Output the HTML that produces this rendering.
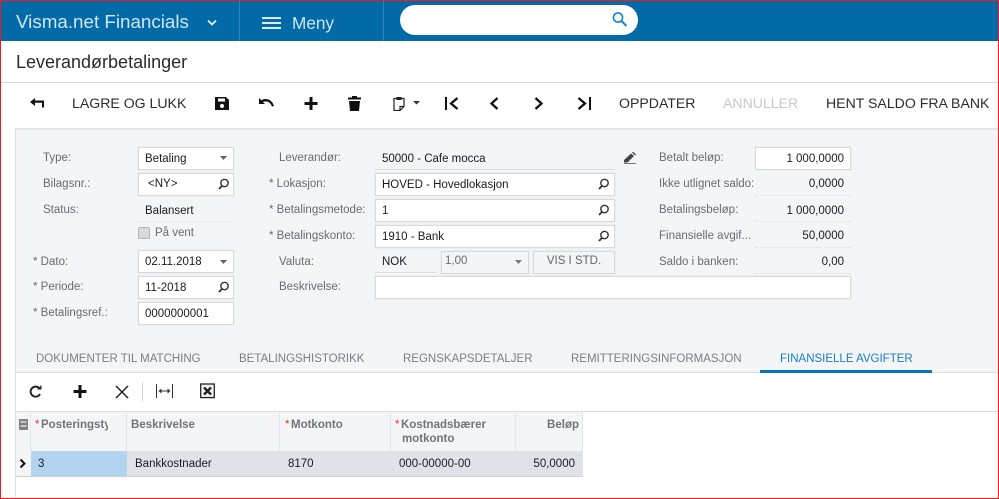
<!DOCTYPE html>
<html><head><meta charset="utf-8">
<style>
html,body{margin:0;padding:0;background:#fff}
#p{position:relative;width:999px;height:499px;overflow:hidden;background:#fff;font-family:"Liberation Sans",sans-serif;font-size:11.500px;color:#1a1a22}
#p div,#p svg{position:absolute}
#p .t{white-space:nowrap;line-height:14px}
.l{color:#6a6a72;font-size:11.500px}
.b{font-size:14.100px;color:#2b2b33}
.i{background:#fff;border:1px solid #d9dadd;box-sizing:border-box;height:23px;box-shadow:0 0 0 .5px #e6e7ea}
.u{height:1px;border-top:1px dotted #dcdde0}
.th{color:#737378;font-weight:bold;font-size:11.500px}
.tab{color:#7d7d84;font-size:11.500px}
.sep{background:#e4e5e8}
</style></head><body>
<div id="p">
<!-- header -->
<div style="left:0;top:0;width:999px;height:41px;background:#036aa8"></div>
<div class="t" style="left:16px;top:11px;font-size:18.800px;line-height:22px;color:#cfe6f3">Visma.net Financials</div>
<svg style="left:206px;top:18px" width="12" height="10"><path d="M2 2.500L6 6.500L10 2.500" fill="none" stroke="#e4f0f7" stroke-width="1.700"/></svg>
<div style="left:239px;top:1px;width:1px;height:40px;background:#2c85bb"></div>
<div style="left:383px;top:1px;width:1px;height:40px;background:#2c85bb"></div>
<svg style="left:262px;top:16px" width="19" height="14"><path d="M0 2h19M0 7h19M0 12h19" stroke="#dcecf5" stroke-width="2"/></svg>
<div class="t" style="left:292px;top:12px;font-size:17.200px;line-height:22px;color:#cfe6f3">Meny</div>
<div style="left:400px;top:5px;width:238px;height:30px;background:#fff;border-radius:15px"></div>
<svg style="left:611px;top:11px" width="17" height="17"><circle cx="7" cy="6.500" r="4.600" fill="none" stroke="#1c84d2" stroke-width="1.600"/><path d="M10.500 10L15.500 15" stroke="#1c84d2" stroke-width="2"/></svg>
<!-- title -->
<div class="t" style="left:16px;top:52px;font-size:18px;line-height:20px;color:#2b2b2f">Leverandørbetalinger</div>
<div style="left:0;top:82px;width:999px;height:1px;background:#dcdcdc"></div>
<!-- toolbar -->
<svg style="left:29px;top:97px" width="16" height="12"><path d="M1 5L6 1V3.500H15V10.500H13V5.800H6V9z" fill="#111"/></svg>
<div class="t b" style="left:72px;top:96px">LAGRE OG LUKK</div>
<svg style="left:215px;top:96px" width="15" height="15"><path d="M0 1h11l3 3v10H0z" fill="#111"/><rect x="3" y="2.500" width="7" height="3" fill="#fff"/><circle cx="7" cy="10" r="2" fill="#fff"/></svg>
<svg style="left:258px;top:97px" width="17" height="12"><path d="M1 1v6h6L5 5.200C8 3.500 12 4.500 14 9.500L16 9C14 2.500 8 .5 3.500 3.200z" fill="#111"/></svg>
<svg style="left:304px;top:97px" width="14" height="13"><path d="M5.500 0h3v5h5v3h-5v5h-3V8H.5V5h5z" fill="#111"/></svg>
<svg style="left:348px;top:96px" width="13" height="15"><path d="M4 0h5v1.500h4v2H0v-2h4zM1 5h11l-1 10H2z" fill="#111"/></svg>
<svg style="left:393px;top:96px" width="28" height="15"><path d="M3.500 2.500H1v12h6l4-4v-8H8.500M7 14.500V10.500h4" fill="none" stroke="#222" stroke-width="1.200"/><rect x="3.500" y="1" width="5" height="3" fill="#222"/><path d="M20 5h7l-3.500 3.500z" fill="#333"/></svg>
<svg style="left:445px;top:96px" width="14" height="15"><path d="M1 1v13" stroke="#111" stroke-width="2"/><path d="M12.500 2L6 7.500L12.500 13" fill="none" stroke="#111" stroke-width="2.300"/></svg>
<svg style="left:489px;top:96px" width="10" height="15"><path d="M8.500 2L2.500 7.500L8.500 13" fill="none" stroke="#111" stroke-width="2.300"/></svg>
<svg style="left:534px;top:96px" width="10" height="15"><path d="M1.500 2L7.500 7.500L1.500 13" fill="none" stroke="#111" stroke-width="2.300"/></svg>
<svg style="left:577px;top:96px" width="14" height="15"><path d="M1.500 2L8 7.500L1.500 13" fill="none" stroke="#111" stroke-width="2.300"/><path d="M13 1v13" stroke="#111" stroke-width="2"/></svg>
<div class="t b" style="left:619px;top:96px">OPPDATER</div>
<div class="t b" style="left:723px;top:96px;color:#c8c8c8">ANNULLER</div>
<div class="t b" style="left:826px;top:96px">HENT SALDO FRA BANK</div>
<!-- panel -->
<div style="left:15px;top:128px;width:983px;height:244px;background:#f4f5f7;border-top:2px solid #e3e3e3;box-sizing:border-box"></div>
<div style="left:15px;top:128px;width:1px;height:370px;background:#e0e1e3"></div>
<!-- left col labels -->
<div class="t l" style="left:43px;top:151px">Type:</div>
<div class="t l" style="left:43px;top:177px">Bilagsnr.:</div>
<div class="t l" style="left:43px;top:203px">Status:</div>
<div class="t l" style="left:33px;top:255px">* Dato:</div>
<div class="t l" style="left:33px;top:280px">* Periode:</div>
<div class="t l" style="left:33px;top:306px">* Betalingsref.:</div>
<div class="i" style="left:138px;top:147px;width:96px"></div>
<div class="t" style="left:145px;top:152px">Betaling</div>
<svg style="left:220px;top:156px" width="8" height="5"><path d="M0 0h7L3.500 4z" fill="#666"/></svg>
<div class="i" style="left:138px;top:173px;width:96px"></div>
<div class="t" style="left:148px;top:177px">&lt;NY&gt;</div>
<svg style="left:218px;top:178px" width="12" height="13"><circle cx="6.500" cy="5" r="3.700" fill="none" stroke="#333" stroke-width="1.400"/><path d="M3.800 8L1 11" stroke="#333" stroke-width="1.800"/></svg>
<div class="t" style="left:145px;top:204px">Balansert</div>
<div class="u" style="left:138px;top:221px;width:96px"></div>
<div style="left:138px;top:227px;width:12px;height:12px;background:#d8d9dc;border:1px solid #b5b5b5;border-radius:2px;box-sizing:border-box"></div>
<div class="t l" style="left:155px;top:226px">På vent</div>
<div class="i" style="left:138px;top:250px;width:96px"></div>
<div class="t" style="left:145px;top:255px">02.11.2018</div>
<svg style="left:220px;top:260px" width="8" height="5"><path d="M0 0h7L3.500 4z" fill="#666"/></svg>
<div class="i" style="left:138px;top:276px;width:96px"></div>
<div class="t" style="left:145px;top:281px">11-2018</div>
<svg style="left:218px;top:281px" width="12" height="13"><circle cx="6.500" cy="5" r="3.700" fill="none" stroke="#333" stroke-width="1.400"/><path d="M3.800 8L1 11" stroke="#333" stroke-width="1.800"/></svg>
<div class="i" style="left:138px;top:302px;width:96px"></div>
<div class="t" style="left:145px;top:307px">0000000001</div>
<!-- middle col -->
<div class="t l" style="left:279px;top:151px">Leverandør:</div>
<div class="t l" style="left:269px;top:177px">* Lokasjon:</div>
<div class="t l" style="left:269px;top:203px">* Betalingsmetode:</div>
<div class="t l" style="left:269px;top:229px">* Betalingskonto:</div>
<div class="t l" style="left:279px;top:255px">Valuta:</div>
<div class="t l" style="left:279px;top:280px">Beskrivelse:</div>
<div class="t" style="left:382px;top:152px">50000 - Cafe mocca</div>
<div style="left:375px;top:169px;width:240px;height:1px;background:#dcdde0"></div>
<svg style="left:623px;top:151px" width="14" height="13"><path d="M1 9L8 2.500L11 5L4.500 11.500H1zM9 1.500L10 .8L13 3.500L12 4.500z" fill="#444"/><path d="M1 12.500h12" stroke="#555" stroke-width=".8"/></svg>
<div class="i" style="left:375px;top:173px;width:240px"></div>
<div class="t" style="left:382px;top:178px">HOVED - Hovedlokasjon</div>
<svg style="left:598px;top:178px" width="12" height="13"><circle cx="6.500" cy="5" r="3.700" fill="none" stroke="#333" stroke-width="1.400"/><path d="M3.800 8L1 11" stroke="#333" stroke-width="1.800"/></svg>
<div class="i" style="left:375px;top:199px;width:240px"></div>
<div class="t" style="left:382px;top:204px">1</div>
<svg style="left:598px;top:204px" width="12" height="13"><circle cx="6.500" cy="5" r="3.700" fill="none" stroke="#333" stroke-width="1.400"/><path d="M3.800 8L1 11" stroke="#333" stroke-width="1.800"/></svg>
<div class="i" style="left:375px;top:225px;width:240px"></div>
<div class="t" style="left:382px;top:230px">1910 - Bank</div>
<svg style="left:598px;top:230px" width="12" height="13"><circle cx="6.500" cy="5" r="3.700" fill="none" stroke="#333" stroke-width="1.400"/><path d="M3.800 8L1 11" stroke="#333" stroke-width="1.800"/></svg>
<div class="t" style="left:382px;top:255px">NOK</div>
<div style="left:375px;top:272px;width:62px;height:1px;background:#dcdde0"></div>
<div class="i" style="left:441px;top:251px;width:88px;background:#f4f5f7"></div>
<div class="t l" style="left:445px;top:254px">1,00</div>
<svg style="left:515px;top:260px" width="8" height="5"><path d="M0 0h7L3.500 4z" fill="#777"/></svg>
<div class="i" style="left:533px;top:251px;width:82px;background:#f4f5f7"></div>
<div class="t" style="left:533px;top:254px;width:82px;text-align:center;color:#666">VIS I STD.</div>
<div class="i" style="left:375px;top:276px;width:476px"></div>
<!-- right col -->
<div class="t l" style="left:659px;top:151px">Betalt beløp:</div>
<div class="t l" style="left:659px;top:177px">Ikke utlignet saldo:</div>
<div class="t l" style="left:659px;top:203px">Betalingsbeløp:</div>
<div class="t l" style="left:659px;top:229px">Finansielle avgif...</div>
<div class="t l" style="left:659px;top:255px">Saldo i banken:</div>
<div class="i" style="left:755px;top:147px;width:96px"></div>
<div class="t" style="left:755px;top:152px;width:89px;text-align:right">1 000,0000</div>
<div class="t" style="left:755px;top:177px;width:89px;text-align:right">0,0000</div>
<div class="u" style="left:755px;top:195px;width:96px"></div>
<div class="t" style="left:755px;top:204px;width:89px;text-align:right">1 000,0000</div>
<div class="u" style="left:755px;top:221px;width:96px"></div>
<div class="t" style="left:755px;top:229px;width:89px;text-align:right">50,0000</div>
<div class="u" style="left:755px;top:247px;width:96px"></div>
<div class="t" style="left:755px;top:255px;width:89px;text-align:right">0,00</div>
<div class="u" style="left:755px;top:273px;width:96px"></div>
<!-- tabs -->
<div class="t tab" style="left:36px;top:352px">DOKUMENTER TIL MATCHING</div>
<div class="t tab" style="left:239px;top:352px">BETALINGSHISTORIKK</div>
<div class="t tab" style="left:403px;top:352px">REGNSKAPSDETALJER</div>
<div class="t tab" style="left:571px;top:352px">REMITTERINGSINFORMASJON</div>
<div class="t tab" style="left:780px;top:352px;color:#1a7cc8">FINANSIELLE AVGIFTER</div>
<div style="left:15px;top:372px;width:983px;height:1px;background:#dcdde0"></div>
<div style="left:760px;top:370px;width:172px;height:3px;background:#0a74c4"></div>
<!-- grid toolbar -->
<svg style="left:28px;top:384px" width="15" height="15"><path d="M11.500 4.500A5 5 0 1 0 12 10" fill="none" stroke="#222" stroke-width="1.900"/><path d="M9 5.500h4.500V1z" fill="#222"/></svg>
<svg style="left:73px;top:385px" width="14" height="13"><path d="M5.500 0h3v5h5v3h-5v5h-3V8H.5V5h5z" fill="#111"/></svg>
<svg style="left:115px;top:385px" width="14" height="14"><path d="M1 1L13 13M13 1L1 13" stroke="#222" stroke-width="1.500"/></svg>
<div style="left:142px;top:382px;width:1px;height:19px;background:#d5d5d5"></div>
<svg style="left:156px;top:384px" width="17" height="14"><path d="M.5 0v14M16.500 0v14" stroke="#333" stroke-width="1"/><path d="M3 7h11" stroke="#333" stroke-width="1"/><path d="M2.500 7L5.500 4.500v5zM14.500 7L11.500 4.500v5z" fill="#333"/></svg>
<svg style="left:200px;top:383px" width="15" height="16"><rect x=".7" y="1" width="13.600" height="13.600" fill="#f3f3f3" stroke="#222" stroke-width="1.300"/><path d="M4 4.500L11 11.500M11 4.500L4 11.500" stroke="#222" stroke-width="2.400"/></svg>
<!-- grid -->
<div style="left:16px;top:411px;width:982px;height:1px;background:#dcdde0"></div>
<div style="left:16px;top:412px;width:567px;height:39px;background:#f4f5f7"></div>
<div style="left:16px;top:451px;width:567px;height:25px;background:#dfe2e6"></div>
<div style="left:16px;top:451px;width:15px;height:25px;background:#f4f5f7"></div>
<div style="left:31px;top:451px;width:96px;height:25px;background:#b3d4ee"></div>
<div style="left:16px;top:476px;width:567px;height:1px;background:#cfd1d5"></div>
<div class="sep" style="left:30px;top:412px;width:1px;height:39px"></div>
<div class="sep" style="left:126px;top:412px;width:1px;height:39px"></div>
<div class="sep" style="left:279px;top:412px;width:1px;height:39px"></div>
<div class="sep" style="left:390px;top:412px;width:1px;height:39px"></div>
<div class="sep" style="left:515px;top:412px;width:1px;height:39px"></div>
<div class="sep" style="left:582px;top:412px;width:1px;height:39px"></div>
<svg style="left:18px;top:418px" width="12" height="13"><path d="M1 1h9v11H1z" fill="#7d8086"/><path d="M2.500 4h6M2.500 8h6" stroke="#eee" stroke-width="1.200"/></svg>
<svg style="left:19px;top:458px" width="8" height="11"><path d="M1.500 1.500L5.500 5.500L1.500 9.500" fill="none" stroke="#111" stroke-width="2"/></svg>
<div class="t" style="left:35px;top:418px;color:#e33">*</div>
<div class="t th" style="left:41px;top:418px;width:67px;overflow:hidden">Posteringstype</div>
<div class="t th" style="left:131px;top:418px">Beskrivelse</div>
<div class="t" style="left:285px;top:418px;color:#e33">*</div>
<div class="t th" style="left:291px;top:418px">Motkonto</div>
<div class="t" style="left:395px;top:418px;color:#e33">*</div>
<div class="t th" style="left:401px;top:418px">Kostnadsbærer</div>
<div class="t th" style="left:402px;top:432px">motkonto</div>
<div class="t th" style="left:515px;top:418px;width:64px;text-align:right">Beløp</div>
<div class="t" style="left:38px;top:457px">3</div>
<div class="t" style="left:135px;top:457px">Bankkostnader</div>
<div class="t" style="left:288px;top:457px">8170</div>
<div class="t" style="left:399px;top:457px">000-00000-00</div>
<div class="t" style="left:515px;top:457px;width:60px;text-align:right">50,0000</div>
<!-- red frame -->
<div style="left:0;top:0;width:999px;height:499px;box-sizing:border-box;border:1px solid #f01c1c"></div>
</div>
</body></html>
